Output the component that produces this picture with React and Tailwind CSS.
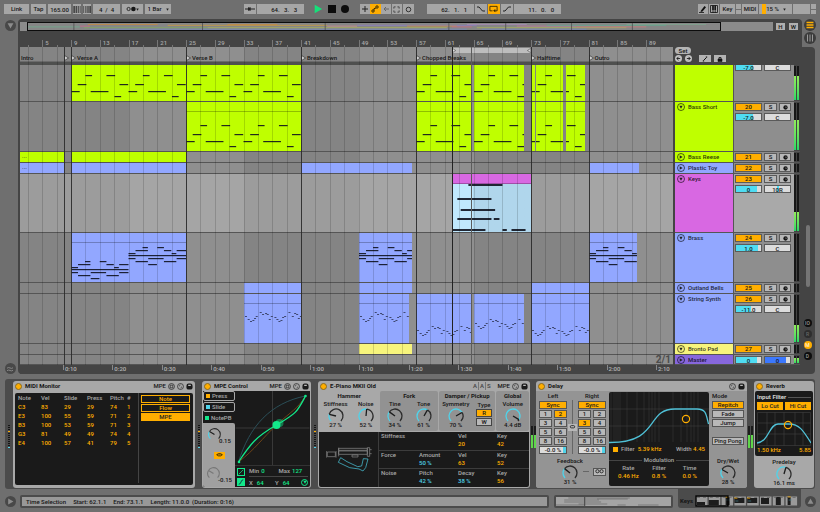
import { useState } from 'react';
import clsx from 'clsx';

// Visible range of the arrangement, in bars
const FIRST_BAR = 1.9;
const BAR_SPAN = 90.85;
const pct = (bar) => `${((bar - FIRST_BAR) / BAR_SPAN) * 100}%`;
const span = (bars) => `${(bars / BAR_SPAN) * 100}%`;

// [x1, x2, y] - x in 1/172 of eight bars, y in pixels
const BASS_NOTES = [
  [0, 26, 26], [20, 46, 19], [43, 63, 10], [59, 112, 26], [106, 132, 10], [130, 150, 31], [145, 171, 19],
];
const BRASS_NOTES = [
  [0, 172, 22], [0, 21, 20], [0, 21, 25], [21, 58, 17], [21, 58, 28], [42, 58, 14], [59, 105, 25],
  [59, 85, 31], [86, 106, 14], [106, 128, 17], [106, 143, 28], [129, 143, 20], [144, 172, 17], [144, 172, 25],
];
const BRASS_LOW = BRASS_NOTES.map(([a, b, y]) => [a, b, y + 14]);
const SYNTH_DOTS = [
  [6, 22], [14, 25], [21, 27], [28, 26], [33, 24], [38, 22], [50, 18], [57, 20], [66, 19], [71, 20], [77, 25],
  [83, 22], [94, 23], [100, 25], [106, 27], [112, 26], [117, 23], [123, 22], [136, 18], [146, 22], [153, 19],
  [159, 20], [164, 24], [170, 22],
];
const synth = (dy) => SYNTH_DOTS.map(([x, y]) => [x - 3, x + 3, y + dy]);
const repeat = (notes, n) =>
  Array.from({ length: n }, (_, i) => notes.map(([a, b, y]) => [a + i * 172, b + i * 172, y])).flat();
const KEYS_NOTES = [
  [49, 151, 10], [16, 118, 24], [26, 129, 35], [16, 118, 44], [125, 142, 44], [0, 100, 55], [151, 164, 55], [178, 220, 55],
];

const BASS_CLIPS = [
  { from: 9, to: 25 }, { from: 25, to: 41 }, { from: 57, to: 64.6 }, { from: 65, to: 72 },
  { from: 73, to: 73.5 }, { from: 73.7, to: 77.5, shift: 0.7 }, { from: 77.8, to: 80.5, shift: 4.8 },
].map((c) => ({ ...c, notes: repeat(BASS_NOTES, 2) }));

const LIME = 'bg-[#bfff00]';
const BLUE = 'bg-[#92a7ff]';

const TRACKS = [
  { id: 19, h: 'h-[37px]', color: LIME, cut: true, vol: '-7.0', fill: 68, pan: 'C', level: 72, clips: BASS_CLIPS },
  { id: 20, name: 'Bass Short', h: 'h-[50px]', color: LIME, open: true, vol: '-7.0', fill: 68, pan: 'C', level: 64, head: true, clips: BASS_CLIPS.slice(1) },
  { id: 21, name: 'Bass Reese', h: 'h-[11px]', color: LIME, clips: [{ from: 1.9, to: 8, more: true }, { from: 9, to: 25 }] },
  { id: 22, name: 'Plastic Toy', h: 'h-[11px]', color: BLUE, clips: [{ from: 1.9, to: 8, more: true }, { from: 9, to: 25 }, { from: 41, to: 56.5 }, { from: 81, to: 88 }] },
  {
    id: 23, name: 'Keys', h: 'h-[59px]', color: 'bg-[#d868e2]', open: true, active: true, vol: '0', fill: 84, pan: '10R', level: 34, head: true,
    clips: [{ from: 62, to: 73, notes: KEYS_NOTES, body: 'bg-linear-to-r from-[#c0e8fd] from-27% to-[#b0d6ec] to-27%', tall: true }],
  },
  {
    id: 24, name: 'Brass', h: 'h-[50px]', color: BLUE, open: true, vol: '1.0', fill: 86, pan: 'C', level: 0, head: true,
    clips: [
      { from: 9, to: 25, notes: [...BRASS_LOW, ...BRASS_NOTES.map(([a, b, y]) => [a + 172, b + 172, y])], tall: true },
      { from: 49, to: 56.5, notes: BRASS_NOTES, tall: true },
      { from: 81, to: 87.7, notes: BRASS_NOTES, tall: true },
    ],
  },
  { id: 25, name: 'Outland Bells', h: 'h-[11px]', color: BLUE, clips: [{ from: 33, to: 41 }, { from: 49, to: 56.5 }, { from: 73, to: 81 }] },
  {
    id: 26, name: 'String Synth', h: 'h-[50px]', color: BLUE, open: true, vol: '-11.0', fill: 58, pan: 'C', level: 36, head: true,
    clips: [
      { from: 33, to: 41, notes: synth(0), tall: true, thin: true },
      { from: 49, to: 56, notes: synth(0), tall: true, thin: true },
      { from: 57, to: 64.6, notes: synth(14), tall: true, thin: true },
      { from: 65, to: 72, notes: synth(7), tall: true, thin: true },
      { from: 73, to: 81, notes: synth(14), tall: true, thin: true },
    ],
  },
  { id: 27, name: 'Bronto Pad', h: 'h-[11px]', color: 'bg-[#f7f47c]', open: true, clips: [{ from: 49, to: 56.5 }] },
  { id: 'master', name: 'Master', h: 'h-[10px]', color: 'bg-[#8767dd]', level: 70, clips: [] },
];

const LOCATORS = [
  { bar: 8, name: '' }, { bar: 9, name: 'Verse A' }, { bar: 25, name: 'Verse B' }, { bar: 41, name: 'Breakdown' },
  { bar: 57, name: 'Chopped Breaks' }, { bar: 73, name: 'Halftime' }, { bar: 81, name: 'Outro' },
];

const BOX = 'flex items-center justify-center bg-[#a6a6a6] h-[10px] text-[#161616]';
const ON = 'bg-[#ffae00]';

/* ---------- small parts ---------- */

const Tri = ({ dir = 'right', className, fill = '#222' }) => (
  <svg viewBox="0 0 6 6" className={className} aria-hidden="true">
    <path d={dir === 'right' ? 'M1 .5 5.5 3 1 5.5Z' : dir === 'down' ? 'M.5 1h5L3 5.5Z' : 'M.5 5h5L3 .5Z'} fill={fill} />
  </svg>
);

const RoundButton = ({ label, dir }) => (
  <button aria-label={label} className="flex size-[11px] items-center justify-center rounded-full bg-[#484848]">
    <Tri dir={dir} fill="#8c8c8c" className="size-[7px]" />
  </button>
);

const Field = ({ label, value, className, style }) => (
  <input aria-label={label} defaultValue={value} style={style} className={clsx('min-w-0 p-0 text-center outline-none', className)} />
);

const Knob = ({ label, value, text, off, className, compact }) => {
  const point = (v, r) => {
    const a = ((135 + v * 270) * Math.PI) / 180;
    return `${9 + Math.cos(a) * r} ${9 + Math.sin(a) * r}`;
  };
  const arc = (from, to) => `M${point(from, 7)}A7 7 0 ${(to - from) * 270 > 180 ? 1 : 0} 1 ${point(to, 7)}`;
  return (
    <label className={clsx('relative flex flex-col items-center', className)}>
      {!compact && <span className="h-[8px] whitespace-nowrap">{label}</span>}
      <svg viewBox="0 0 18 18" className={compact ? 'size-[15px] self-start' : '-mt-px size-[18px]'} fill="none" strokeWidth="1.300">
        <path d={arc(value, 1)} stroke={off ? '#777' : '#2c2c2c'} />
        <path d={arc(0, value)} stroke={off ? '#777' : '#4fd3ea'} />
        <path d={`M9 9 ${point(value, 7)}`} stroke={off ? '#777' : '#1c1c1c'} />
      </svg>
      <span className={clsx('h-[8px] whitespace-nowrap', compact ? '-mt-[5px] ml-[12px]' : '-mt-1')}>{text}</span>
      <input type="range" aria-label={label} min="0" max="1" step="0.01" defaultValue={value} className="absolute inset-0 w-full opacity-0" />
    </label>
  );
};

/* ---------- top bar ---------- */

const TopBar = () => (
  <header className="flex h-[19px] items-center px-1 pb-px">
    <div className="flex gap-[2px]">
      <button className={clsx(BOX, 'w-[25px]')}>Link</button>
      <button className={clsx(BOX, 'w-[15px]')}>Tap</button>
      <Field label="Tempo" value="165.00" className={clsx(BOX, 'w-[23px]')} />
      {['Nudge down', 'Nudge up'].map((l, k) => (
        <button key={l} aria-label={l} className={clsx(BOX, 'w-[8px]')}>
          <svg viewBox="0 0 8 7" className="w-[8px]" fill="#222">
            <path d={k ? 'M.5 0h.6v7H.5ZM2.500 0h.8v7h-.8ZM4.500 0h1v7h-1ZM6.500 0h1.200v7H6.500Z' : 'M.5 0h1.200v7H.5ZM2.700 0h1v7h-1ZM4.800 0h.8v7h-.8ZM6.800 0h.6v7h-.6Z'} />
          </svg>
        </button>
      ))}
      <Field label="Time signature" value="4  /  4" className={clsx(BOX, 'w-[27px] whitespace-pre')} />
      <button aria-label="Metronome" className={clsx(BOX, 'w-[21px] justify-between px-[2px]')}>
        <svg viewBox="0 0 10 6" className="h-[6px] w-[10px]">
          <circle cx="2.600" cy="3" r="1.600" fill="none" stroke="#222" strokeWidth=".9" />
          <circle cx="7.400" cy="3" r="2.300" fill="#161616" />
        </svg>
        <Tri dir="down" className="size-[3px]" />
      </button>
      <div className={clsx(BOX, 'w-[26px]')}>
        <select aria-label="Quantization" className="w-[18px] appearance-none p-0 outline-none">
          <option>1 Bar</option>
        </select>
        <Tri dir="down" className="size-[3px]" />
      </div>
    </div>
    <div className="flex-[74]" />
    <div className="flex items-center">
      <button aria-label="Follow" className={clsx(BOX, 'mr-px w-[12px]')}>
        <svg viewBox="0 0 10 6" className="w-[10px]"><path d="M0 3h10" stroke="#222" /><path d="M3 1v4l3-2Z" fill="#222" /><path d="M5 1v4" stroke="#222" /></svg>
      </button>
      <Field label="Position" value="64.   3.   3" className={clsx(BOX, 'w-[47px] pl-2 whitespace-pre')} />
      <button aria-label="Play" className="ml-[9px]"><Tri fill="#16e07a" className="size-[10px]" /></button>
      <button aria-label="Stop" className="ml-[5px] size-[8px] bg-[#0c0c0c]" />
      <button aria-label="Record" className="ml-[5px] size-[8px] rounded-full bg-[#0c0c0c]" />
      <button aria-label="Overdub" className={clsx(BOX, 'ml-[11px] w-[10px]')}>
        <svg viewBox="0 0 6 6" className="w-[6px]"><path d="M3 0v6M0 3h6" stroke="#222" /></svg>
      </button>
      <button aria-label="Automation arm" className={clsx(BOX, ON, 'w-[11px]')}>
        <svg viewBox="0 0 8 8" className="w-[8px]" fill="none" stroke="#3a2a00"><circle cx="2" cy="6" r="1.200" /><circle cx="6" cy="2" r="1.200" /><path d="M3 5.400V3.600L5 3" /></svg>
      </button>
      <button aria-label="Re-enable automation" className={clsx(BOX, 'w-[10px]')}>
        <svg viewBox="0 0 6 6" className="w-[6px]" fill="none" stroke="#666"><path d="M6 3H1M3 1 1 3l2 2" /></svg>
      </button>
      <button aria-label="Capture" className={clsx(BOX, 'ml-px w-[10px]')}>
        <svg viewBox="0 0 8 8" className="w-[7px]" fill="none" stroke="#444"><path d="M1 3V1h2M5 1h2v2M7 5v2H5M3 7H1V5" /></svg>
      </button>
      <button aria-label="Session record" className={clsx(BOX, 'ml-px w-[11px]')}>
        <svg viewBox="0 0 8 8" className="w-[7px]" fill="none" stroke="#222"><circle cx="4" cy="4" r="2.600" /></svg>
      </button>
      <Field label="Loop start" value="62.   1.   1" className={clsx(BOX, 'ml-[13px] w-[47px] pl-2 whitespace-pre')} />
      <button aria-label="Punch in" className={clsx(BOX, 'ml-px w-[12px]')}>
        <svg viewBox="0 0 8 6" className="w-[8px]" fill="none" stroke="#222"><path d="M0 1h2l3.500 4H8" /></svg>
      </button>
      <button aria-label="Loop" className={clsx(BOX, ON, 'ml-px w-[12px]')}>
        <svg viewBox="0 0 10 8" className="w-[9px]" fill="none" stroke="#3a2a00"><path d="M4 6.500H1v-5h8v5H6.500" /><path d="M7 4.500v3.500l-2.500-1.700Z" fill="#3a2a00" stroke="none" /></svg>
      </button>
      <button aria-label="Punch out" className={clsx(BOX, 'ml-px w-[12px]')}>
        <svg viewBox="0 0 8 6" className="w-[8px]" fill="none" stroke="#222"><path d="M0 5h2l3.500-4H8" /></svg>
      </button>
      <Field label="Loop length" value="11.   0.   0" className={clsx(BOX, 'ml-px w-[47px] pl-2 whitespace-pre')} />
    </div>
    <div className="flex-[140]" />
    <div className="flex gap-px">
      <button aria-label="Draw mode" className={clsx(BOX, 'w-[10px]')}>
        <svg viewBox="0 0 8 8" className="w-[8px]"><path d="M2 5.500 5.500 1 7 2.200 3.500 6.500 1.500 7Z" fill="#111" /><path d="M0 7.500h5" stroke="#111" strokeWidth=".8" /></svg>
      </button>
      <button aria-label="Computer keyboard" className={clsx(BOX, 'w-[10px]')}>
        <svg viewBox="0 0 8 8" className="w-[8px]"><path d="M.5 .5h7v7h-7Z" fill="#aaa" stroke="#111" strokeWidth=".8" /><path d="M3 0v8M5.200 0v8" stroke="#111" strokeWidth=".8" /><path d="M2.300 1h1.400v4H2.300ZM4.500 1h1.400v4H4.500Z" fill="#111" /></svg>
      </button>
      <button className={clsx(BOX, 'w-[15px]')}>Key</button>
      <div className="flex w-[5px] flex-col gap-px"><i className="flex-1 bg-[#a6a6a6]" /><i className="flex-1 bg-[#a6a6a6]" /></div>
      <button className={clsx(BOX, 'w-[16px]')}>MIDI</button>
      <div className={clsx(BOX, 'w-[33px] justify-between pr-[3px]')}>
        <span className="h-full w-[4px] bg-[#ffae00]" />
        <span>15 %</span>
        <Tri dir="down" className="ml-[4px] size-[3px]" />
      </div>
      <div className={clsx(BOX, 'w-[17px]')} />
      <div className="flex w-[5px] flex-col gap-px"><i className="flex-1 bg-[#a6a6a6]" /><i className="flex-1 bg-[#a6a6a6]" /></div>
    </div>
  </header>
);

/* ---------- arrangement ---------- */

const OVERVIEW_LINES = [
  [0, 52, 5, '#6fa98b'], [60, 130, 2, '#c98b3e'], [56, 180, 6, '#7fa860'], [62, 300, 8, '#7488c0'], [140, 300, 3, '#c99a3e'],
  [52, 62, 4, '#c96a8b'], [180, 420, 6, '#a7b05a'], [200, 250, 2, '#c98b3e'], [300, 330, 4, '#d09090'], [330, 450, 3, '#8b7dc0'],
  [380, 430, 4, '#c98b3e'], [300, 440, 8, '#7488c0'], [425, 445, 5, '#c96a8b'], [440, 500, 2, '#a88bb8'], [450, 600, 6, '#a7b05a'],
  [490, 550, 4, '#c07a9a'], [520, 640, 3, '#62a890'], [550, 620, 5, '#d07a7a'], [600, 680, 2, '#7fa890'], [455, 560, 8, '#7488c0'],
];

const Overview = () => (
  <div className="flex h-[9px] items-stretch pl-[2px]">
    <div className="flex flex-1 bg-[#8b8b8b] pl-[7px]">
      <div className="flex-[694] border border-[#0c0c0c] bg-[#868686]">
        <svg viewBox="0 0 694 9" preserveAspectRatio="none" className="block h-full w-full">
          {OVERVIEW_LINES.map(([a, b, y, c], k) => <path key={k} d={`M${a} ${y}H${b}`} stroke={c} strokeWidth=".9" />)}
          <path d="M46 0v9M175 0v9M298 0v9M422 0v9M479 0v9M545 0v9M606 0v9" stroke="#555" />
        </svg>
      </div>
      <div className="flex-[52]" />
    </div>
    <div className="flex w-[29px] items-center justify-end gap-[4px] pr-[4px]">
      <button className="h-[7px] w-[9px] bg-[#b0b0b0] leading-[7px]">H</button>
      <button className="h-[7px] w-[9px] bg-[#b0b0b0] leading-[7px]">W</button>
    </div>
  </div>
);

const BarRuler = () => (
  <div className="relative mr-[129px] ml-[2px] h-[8px] overflow-hidden text-[#a8a8a8]">
    {Array.from({ length: 44 }, (_, k) => 3 + k * 2).map((bar) => (
      <span
        key={bar}
        className={clsx('absolute bottom-0 border-l border-[#777] pl-[2px] leading-[6px]', bar % 4 === 1 ? 'h-[7px]' : 'h-[2px]')}
        style={{ left: pct(bar) }}
      >
        {bar % 4 === 1 && bar}
      </span>
    ))}
  </div>
);

const Clip = ({ clip, track }) => (
  <div
    className={clsx('absolute inset-y-0 flex flex-col overflow-hidden', track.color)}
    style={{ left: pct(clip.from), width: span(clip.to - clip.from) }}
  >
    {track.head && <div className="h-[10px] shrink-0 border-b border-black/25" />}
    {clip.more && <span className="pl-[2px] leading-[8px] text-black/70">...</span>}
    {clip.notes && (
      <div className={clsx('relative flex-1', clip.body)}>
        <svg
          viewBox={`${((clip.shift || 0) * 172) / 8} 0 ${((clip.to - clip.from) * 172) / 8} ${clip.body ? 58 : clip.tall ? 49 : 36}`}
          preserveAspectRatio="none"
          className={clsx('absolute bottom-0 w-full', clip.body ? 'h-[58px]' : clip.tall ? 'h-[49px]' : 'h-[36px]')}
        >
          {clip.notes.map(([a, b, y], k) => (
            <rect key={k} x={a} y={y} width={b - a} height={clip.body ? 2 : clip.thin ? 0.8 : 1.2} fill="#10131f" opacity={clip.thin ? 0.8 : 0.9} />
          ))}
        </svg>
      </div>
    )}
  </div>
);

const Bands = () => (
  <>
    {[17, 49, 81].map((bar) => (
      <div key={bar} className="absolute inset-y-0 bg-[#8f8f8f]" style={{ left: pct(bar), width: span(Math.min(16, 92.75 - bar)) }} />
    ))}
  </>
);

const GridLines = () => (
  <>
    {Array.from({ length: 45 }, (_, k) => 3 + k * 2).map((bar) => (
      <i key={bar} className="absolute inset-y-0 w-px bg-black/15" style={{ left: pct(bar) }} />
    ))}
    {LOCATORS.map(({ bar }) => (
      <i key={bar} className="absolute inset-y-0 w-px bg-[#2b2b2b]/90" style={{ left: pct(bar) }} />
    ))}
    <i className="absolute inset-y-0 w-px bg-[#222]" style={{ left: pct(62) }} />
    <i className="absolute inset-y-0 w-px bg-[#5c5c5c]" style={{ left: pct(64.6) }} />
  </>
);

const Timeline = () => (
  <div className="relative flex-1 overflow-hidden">
    <div className="absolute inset-x-0 top-0 bottom-[9px] bg-[#848484]"><Bands /></div>
    <div className="relative h-[14px]">
      <div className="absolute top-px flex h-[5px] items-center justify-between bg-[#bdbdbd]" style={{ left: pct(62), width: span(11) }}>
        <svg viewBox="0 0 5 6" className="h-[5px]"><path d="M.5 .5 4.500 3 .5 5.500Z" fill="#ddd" stroke="#333" strokeWidth=".6" /></svg>
        <svg viewBox="0 0 5 6" className="h-[5px]"><path d="M4.500 .5 .5 3l4 2.500Z" fill="#ddd" stroke="#333" strokeWidth=".6" /></svg>
      </div>
      <span className="absolute bottom-0 pl-px leading-[7px]">Intro</span>
      {LOCATORS.map((l) => (
        <span key={l.bar} className="absolute bottom-0 flex items-center gap-px leading-[7px] whitespace-nowrap" style={{ left: pct(l.bar) }}>
          <svg viewBox="0 0 5 6" className="h-[6px]"><path d="M.5 .5 4.500 3 .5 5.500Z" fill="#d0d0d0" stroke="#222" strokeWidth=".6" /></svg>
          {l.name}
        </span>
      ))}
    </div>
    <div className="relative h-[4px] border-t border-[#6b6b6b] bg-[#4f504f]" />
    {TRACKS.map((t) => (
      <div key={t.id} className={clsx('relative border-b border-[#555]', t.h, t.active && 'bg-white/20')}>
        {t.clips.map((c) => <Clip key={c.from} clip={c} track={t} />)}
      </div>
    ))}
    <div className="relative h-[9px] bg-[#444] text-[#b4b4b4]">
      {Array.from({ length: 13 }, (_, k) => (k + 1) * 10).map((s) => (
        <span key={s} className="absolute top-0 h-[5px] border-l border-[#888] pl-px leading-[8px]" style={{ left: pct(1 + s * 0.6875) }}>
          {Math.floor(s / 60)}:{String(s % 60).padStart(2, '0')}
        </span>
      ))}
    </div>
    <div className="pointer-events-none absolute inset-x-0 top-0 bottom-[9px]"><GridLines /></div>
    <span className="absolute right-[2px] bottom-[9px] text-[10px] leading-[11px] font-bold text-[#4c4c4c]">2/1</span>
  </div>
);

const Meter = ({ level = 0 }) => (
  <div className="flex w-[6px] gap-px py-px pr-px">
    {[0, 1].map((k) => (
      <span key={k} className="flex flex-1 flex-col justify-end bg-[#161616]">
        <i className="bg-linear-to-t from-[#24d964] to-[#8fee5a]" style={{ height: `${level}%` }} />
      </span>
    ))}
  </div>
);

const slider = (fill, color) => ({ background: `linear-gradient(90deg, ${color} ${fill}%, #dcdcdc ${fill}%)` });

const CELL = 'h-[8px] border border-[#5a5a5a] leading-[6px]';

const TrackMixer = ({ t }) => {
  const [on, setOn] = useState(true);
  const master = t.id === 'master';
  return (
    <div className={clsx('flex flex-1 flex-col gap-[2px] overflow-hidden pl-px', t.active ? 'bg-[#a9a9a9]' : 'bg-[#8e8e8e]', t.cut ? 'pt-0' : 'pt-px')}>
      {master && (
        <div className="flex gap-[2px]">
          <Field label="Master volume" value="0" className={clsx(CELL, 'w-[27px]')} style={slider(84, '#4fdcf2')} />
          <Field label="Cue volume" value="0" className={clsx(CELL, 'w-[27px]')} style={slider(84, '#3b78ff')} />
        </div>
      )}
      {!master && !t.cut && (
        <div className="flex gap-[2px]">
          <button onClick={() => setOn(!on)} className={clsx(CELL, 'w-[27px]', on ? ON : 'bg-[#999]')}>{t.id}</button>
          <button className={clsx(CELL, 'w-[13px] bg-[#b8b8b8]')}>S</button>
          <button aria-label={`Arm ${t.name}`} className={clsx(CELL, 'flex w-[12px] items-center justify-center bg-[#b8b8b8]')}>
            <svg viewBox="0 0 6 6" className="size-[5px]"><circle cx="3" cy="3" r="2.600" fill="#161616" /><path d="M3.200 1.500 4.500 2.600 3.200 3.600Z" fill="#bbb" /></svg>
          </button>
        </div>
      )}
      {t.vol && (
        <div className="flex gap-[2px]">
          <Field label={`${t.name || 'Bass'} volume`} value={t.vol} className={clsx(CELL, 'w-[27px]', t.cut && '-mt-[2px]')} style={slider(t.fill, '#4fdcf2')} />
          <Field label={`${t.name || 'Bass'} pan`} value={t.pan} className={clsx(CELL, 'w-[27px]', t.cut && '-mt-[2px]')} style={t.pan === 'C' ? slider(0, '#ddd') : { background: 'linear-gradient(90deg, #dcdcdc 50%, #4fdcf2 50%, #4fdcf2 58%, #dcdcdc 58%)' }} />
        </div>
      )}
    </div>
  );
};

const TrackHeaders = () => (
  <div className="w-[127px] shrink-0 pl-[2px]">
    <div className="flex h-[18px] flex-col items-start">
      <button className="h-[7px] w-[16px] rounded-full bg-[#b4b4b4] leading-[7px]">Set</button>
      <div className="mt-px flex items-center">
        {['M5 3H1M3 1 1 3l2 2', 'M1 3h4M3 1l2 2-2 2'].map((d, k) => (
          <button key={d} aria-label={k ? 'Next locator' : 'Previous locator'} className="mr-[3px] flex size-[7px] items-center justify-center rounded-full bg-[#c2c2c2]">
            <svg viewBox="0 0 6 6" className="size-[5px]" fill="none" stroke="#111"><path d={d} /></svg>
          </button>
        ))}
        <button aria-label="Automation mode" className="ml-[4px] flex h-[7px] w-[12px] items-center justify-center bg-[#b4b4b4]">
          <svg viewBox="0 0 6 6" className="size-[6px]" fill="none" stroke="#111"><path d="M1.500 4.500l3-3" /><path d="M.8 5h1.400M3.800 1h1.400" /></svg>
        </button>
        <button aria-label="Lock envelopes" className="ml-[3px] flex h-[7px] w-[12px] items-center justify-center bg-[#b4b4b4]">
          <svg viewBox="0 0 6 6" className="size-[6px]" fill="none" stroke="#111"><path d="M1 3h4v2.500H1Z" fill="#111" strokeWidth=".6" /><path d="M2 3V1.500h2V3" strokeWidth=".8" /></svg>
        </button>
      </div>
    </div>
    {TRACKS.map((t) => (
      <div key={t.id} className={clsx('flex border-b border-[#555]', t.h)}>
        <div className={clsx('flex w-[58px] items-start gap-[3px] pl-[2px]', t.color)}>
          {t.name && (
            <>
              <button aria-label={`Fold ${t.name}`} className="mt-px flex size-[8px] items-center justify-center rounded-full border border-black/60">
                <Tri dir={t.open ? 'down' : 'right'} className="size-[4px]" />
              </button>
              <span className="leading-[9px] text-black/80">{t.name}</span>
            </>
          )}
        </div>
        <div className="w-px bg-[#555]" />
        <TrackMixer t={t} />
        <Meter level={t.level} />
      </div>
    ))}
  </div>
);

const Arrangement = () => (
  <section className="flex">
    <div className="flex w-[18px] flex-col items-center justify-between pt-px pl-[2px]">
      <RoundButton label="Show browser" dir="down" />
      <button aria-label="Groove pool" className="flex size-[11px] items-center justify-center rounded-full bg-[#484848]">
        <svg viewBox="0 0 8 8" className="size-[8px]" fill="none" stroke="#8c8c8c" strokeWidth=".9"><path d="M1 3.200c2-2 4 1.500 6-.4M1 5.700c2-2 4 1.500 6-.4" /></svg>
      </button>
    </div>
    <div className="flex min-w-0 flex-1 flex-col">
      <div className="flex h-[28px]">
        <div className="flex flex-1 flex-col justify-between rounded-t bg-[#444] pt-[3px]">
          <Overview />
          <BarRuler />
        </div>
        <div className="flex w-[18px] flex-col items-center gap-px pr-[2px]">
          <button aria-label="Arrangement view" className="flex size-[12px] items-center justify-center rounded-full bg-[#3c3c3c]">
            <svg viewBox="0 0 8 8" className="size-[8px]" stroke="#ffae00" strokeWidth="1.400"><path d="M.5 1.500h7M.5 4h7M.5 6.500h7" /></svg>
          </button>
          <button aria-label="Session view" className="flex size-[12px] items-center justify-center rounded-full bg-[#3c3c3c]">
            <svg viewBox="0 0 8 8" className="size-[8px]" stroke="#999"><path d="M1.500 .5v7M4 .5v7M6.500 .5v7" /></svg>
          </button>
        </div>
      </div>
      <div className="mr-[5px] flex rounded-tr rounded-b bg-[#444] pl-[2px]">
        <Timeline />
        <TrackHeaders />
        <div className="flex w-[15px] shrink-0 flex-col items-center justify-end gap-[3px] pb-[14px]">
          <i className="mb-[29px] h-[62px] w-[4px] rounded-full bg-[#757575]" />
          {['IO', 'R', 'M', 'D'].map((l) => (
            <button
              key={l}
              className={clsx('flex size-[8px] items-center justify-center rounded-full text-[5px] leading-none',
                l === 'M' ? 'bg-[#ffae00] text-[#fff3d0]' : l === 'R' ? 'bg-[#2e2e2e] text-[#666]' : 'bg-[#0e0e0e] text-[#999]')}
            >
              {l}
            </button>
          ))}
        </div>
      </div>
    </div>
  </section>
);

/* ---------- devices ---------- */

const Device = ({ title, extra, mpe, icons = 3, className, children }) => (
  <article className={clsx('flex min-w-0 grow flex-col rounded-[3px] bg-[#a8a8a8]', className)}>
    <header className="flex h-[10px] shrink-0 items-center gap-[2px] px-[2px]">
      <button aria-label={`${title} on`} className="size-[7px] rounded-full border border-[#8a6a20] bg-[#ffae00]" />
      <h2 className="pl-px font-bold whitespace-nowrap">{title}</h2>
      <span className="flex-1" />
      {extra}
      {mpe && <span>MPE</span>}
      {icons > 2 && (
        <svg viewBox="0 0 8 8" className="size-[7px]" fill="none" stroke="#222" strokeWidth=".8"><circle cx="4" cy="4" r="3.400" /><path d="M2.500 2.500h3v3h-3Z" /></svg>
      )}
      {icons > 1 && (
        <>
          <svg viewBox="0 0 8 8" className="size-[7px]" fill="none" stroke="#222" strokeWidth=".8"><circle cx="4" cy="4" r="3.400" /><path d="M2.200 3.800 4 2.200M4 5.800l1.800-1.600" /></svg>
          <svg viewBox="0 0 8 8" className="size-[7px]"><rect x=".5" y=".5" width="7" height="7" rx="2.500" fill="#1a1a1a" /><path d="M2.500 2h3v1.500h-3Z" fill="#bbb" /></svg>
        </>
      )}
    </header>
    {children}
  </article>
);

const ChainMeter = ({ green, width = 'w-[7px]' }) => (
  <div className={clsx('flex shrink-0 items-center justify-center', width)}>
    {green ? (
      <div className="mt-[4px] flex h-[22px] gap-px">
        {[0, 1].map((k) => (
          <i key={k} className="w-[2px] bg-linear-to-t from-[#5fd64a] from-60% to-[#1c1c1c] to-60%" />
        ))}
      </div>
    ) : (
      <div className="mt-[4px] flex flex-col gap-px">
        {Array.from({ length: 12 }, (_, k) => (
          <i key={k} className={clsx('h-px w-[2px]', k === 3 ? 'bg-[#ffae00]' : k === 11 ? 'bg-[#4fd3ea]' : 'bg-[#161616]')} />
        ))}
      </div>
    )}
  </div>
);

const NOTES = [
  ['C3', 83, 29, 29, 74, 1],
  ['E3', 100, 55, 59, 71, 2],
  ['B3', 100, 53, 59, 71, 3],
  ['G3', 81, 49, 49, 74, 4],
  ['E4', 100, 57, 41, 79, 5],
];

const MidiMonitor = () => (
  <Device title="MIDI Monitor" mpe className="basis-[182px]">
    <div className="m-[2px] mb-[3px] flex flex-1 rounded-[2px] bg-[#1a1a1a] pb-[2px] pr-[3px] pl-[3px]">
      <div className="flex-1 border-r border-[#444]">
        <table className="w-[115px] table-fixed text-left leading-[9px]">
          <thead className="text-[#a8a8a8]">
            <tr>
              {['Note', 'Vel', 'Slide', 'Press', 'Pitch', '#'].map((h) => (
                <th key={h} className={clsx('p-0 font-medium', h === '#' ? 'w-[7px]' : h === 'Pitch' ? 'w-[17px]' : 'w-[23px]')}>{h}</th>
              ))}
            </tr>
          </thead>
          <tbody className="text-[#ffae00]">
            {NOTES.map((r) => (
              <tr key={r[5]}>{r.map((v, k) => <td key={k} className="p-0">{v}</td>)}</tr>
            ))}
          </tbody>
        </table>
      </div>
      <div className="flex w-[51px] flex-col gap-px pt-[2px] pl-[2px] leading-[6px] text-[#ffae00]">
        <button className="h-[8px] border border-[#ffae00]">Note</button>
        <button className="h-[8px] border border-[#ffae00]">Flow</button>
        <button className="h-[8px] bg-[#ffae00] text-[#222]">MPE</button>
      </div>
    </div>
  </Device>
);

const MpeControl = () => (
  <Device title="MPE Control" mpe className="basis-[109px]">
    <div className="mx-px mb-px flex flex-1 overflow-hidden rounded-b-[2px] bg-[#1a1a1a]">
      <div className="flex w-[32px] flex-col text-[#a8a8a8]">
        {[['Press', 'bg-[#ffae00]'], ['Slide', 'bg-[#4fd3ea]'], ['NotePB', 'bg-[#12e88a]']].map(([name, color]) => (
          <button
            key={name}
            className={clsx('flex h-[10px] items-center gap-[2px] pl-[2px] leading-none', name !== 'NotePB' && 'mb-px rounded-[2px] border border-[#a8a8a8]')}
          >
            <i className={clsx('size-[4px]', color)} />
            {name}
          </button>
        ))}
        <div className="flex flex-1 flex-col items-center justify-around rounded-tr-[2px] bg-[#a0a0a0] text-[#161616]">
          <Knob label="Press amount" compact value={0.28} text="0.15" />
          <button aria-label="Link amounts" className="flex h-[7px] w-[11px] items-center justify-center bg-[#ffae00]">
            <svg viewBox="0 0 8 4" className="w-[7px]" fill="none" stroke="#3a2a00"><rect x="1.500" y=".7" width="5" height="2.600" rx="1.300" /><path d="M0 2h8" strokeWidth=".6" /></svg>
          </button>
          <Knob label="Release amount" compact value={0.28} text="-0.15" off />
        </div>
      </div>
      <div className="flex flex-1 flex-col">
        <svg viewBox="0 0 74 74" className="h-[74px] w-full" fill="none">
          <path d="M37 0v74M0 37h74" stroke="#484848" strokeWidth=".7" />
          <path d="M3 71C14 35 35 12 70 5" stroke="#2b4f58" />
          <path d="M3 71C20 58 26 48 41 34S62 18 70 5" stroke="#6e4418" />
          <path d="M3 71C15 53 20 46 41 34S62 20 70 5" stroke="#12e88a" strokeWidth="1.300" />
          <circle cx="44" cy="32" r="4" fill="#12e88a" opacity=".45" />
          <circle cx="41" cy="34" r="4" fill="#12e88a" />
          <circle cx="3.500" cy="71" r="1.300" fill="#12e88a" /><circle cx="70" cy="5" r="1.300" fill="#12e88a" />
        </svg>
        <div className="flex flex-1 items-center gap-[4px] border-t border-[#333] px-[2px]">
          <div className="flex flex-col gap-[2px]">
            {['M1 7 7 1', 'M1 7C5 7 3 1 7 1'].map((d, k) => (
              <button key={d} aria-label={k ? 'S curve' : 'Linear curve'} className={clsx('size-[8px] border border-[#12e88a]', k && 'bg-[#12e88a]')}>
                <svg viewBox="0 0 8 8" className="size-[6px]" fill="none" stroke={k ? '#113' : '#12e88a'}><path d={d} /></svg>
              </button>
            ))}
          </div>
          <div className="flex-1">
            <dl className="grid grid-cols-2 border-b border-[#444] text-[#a8a8a8] [&_dd]:text-[#12e88a]">
              <div className="flex h-[9px] gap-[2px]"><dt>Min</dt><dd>0</dd></div>
              <div className="flex h-[9px] gap-[2px]"><dt>Max</dt><dd>127</dd></div>
            </dl>
            <div className="flex h-[10px] items-end">
              <dl className="grid flex-1 grid-cols-2 text-[#a8a8a8] [&_dd]:text-[#12e88a]">
                <div className="flex gap-[4px]"><dt>X</dt><dd>64</dd></div>
                <div className="flex gap-[4px]"><dt>Y</dt><dd>64</dd></div>
              </dl>
              <button aria-label="More" className="mb-px flex size-[7px] items-center justify-center rounded-full border border-[#12e88a]">
                <Tri dir="down" fill="#12e88a" className="size-[4px]" />
              </button>
            </div>
          </div>
        </div>
      </div>
    </div>
  </Device>
);

const MATRIX = [
  [['Stiffness'], [], ['Vel', '20'], ['Key', '42']],
  [['Force'], ['Amount', '50 %'], ['Vel', '63'], ['Key', '52']],
  [['Noise'], ['Pitch', '42 %'], ['Decay', '38 %'], ['Key', '56']],
];

const Panel = ({ title, className, children }) => (
  <section className={clsx('flex flex-col', className)}>
    <h3 className="h-[9px] pt-px text-center font-bold">{title}</h3>
    <div className="flex justify-around">{children}</div>
  </section>
);

const EPiano = () => (
  <Device
    title="E-Piano MKII Old"
    mpe
    icons={2}
    className="basis-[212px]"
    extra={<span className="mr-[4px] flex text-[#444]">{['A', 'A', 'S'].map((l, k) => <b key={k} className="border-r border-[#777] px-px font-medium last:border-0">{l}</b>)}</span>}
  >
    <div className="flex h-[40px] gap-px px-px">
      <Panel title="Hammer" className="flex-[61]">
        <Knob label="Stiffness" value={0.22} text="27 %" />
        <Knob label="Noise" value={0.52} text="52 %" />
      </Panel>
      <Panel title="Fork" className="flex-[58] rounded-[2px] bg-[#929292]">
        <Knob label="Tine" value={0.3} text="34 %" />
        <Knob label="Tone" value={0.61} text="61 %" />
      </Panel>
      <Panel title="Damper / Pickup" className="flex-[57] rounded-[2px] bg-[#929292]">
        <Knob label="Symmetry" value={0.72} text="70 %" />
        <div className="flex flex-col items-center">
          <span className="h-[9px] pt-px">Type</span>
          <button className={clsx('h-[8px] w-[16px] border border-[#444] leading-[6px]', ON)}>R</button>
          <button className="mt-px h-[8px] w-[16px] border border-[#444] bg-[#b8b8b8] leading-[6px]">W</button>
        </div>
      </Panel>
      <Panel title="Global" className="flex-[33] rounded-[2px] bg-[#929292]">
        <Knob label="Volume" value={0.95} text="4.4 dB" />
      </Panel>
    </div>
    <div className="mx-px mt-px mb-px flex flex-1 rounded-b-[2px] bg-[#1a1a1a]">
      <div className="flex w-[60px] items-center justify-center border-r border-[#3c3c3c]">
        <svg viewBox="0 0 138 74" className="w-[46px]" fill="none" stroke="#8f8f8f" strokeWidth="2">
          <path d="M4 15h24v14H4ZM1 12v20M30 12v20M38 4h86v6H38ZM38 12h86v10H38ZM38 2v26M124 2h7v26h-7ZM131 8h6M131 20h6M78 24h18v6H78Z" />
          <path d="M44 32 37 46l34 16 28 4 12 6 8-10 7-26-14-1-5 22-12 2-32-15Z" stroke="#4fd3ea" />
        </svg>
      </div>
      <div className="flex flex-1 flex-col">
        {MATRIX.map((row) => (
          <div key={row[0][0]} className="grid flex-1 grid-cols-[38px_39px_39px_1fr] border-b border-[#3c3c3c] pl-[2px] text-[#a8a8a8] last:border-0">
            {row.map(([l, v], k) => (
              <div key={k}>
                <div className="h-[8px]">{l}</div>
                <div className={clsx('h-[8px]', v?.includes('%') ? 'text-[#4fd3ea]' : 'text-[#ffae00]')}>{v}</div>
              </div>
            ))}
          </div>
        ))}
      </div>
    </div>
  </Device>
);

const KEY = 'h-[8px] border border-[#555] leading-[6px] bg-[#b8b8b8]';
const KEY_ON = 'h-[8px] border border-[#555] leading-[6px] bg-[#ffae00]';

const DelayTime = ({ name, selected }) => {
  const [step, setStep] = useState(selected);
  return (
    <div className="flex w-[28px] flex-col gap-px">
      <span className="h-[8px] text-center">{name}</span>
      <button className={KEY_ON}>Sync</button>
      <div className="grid grid-cols-2 gap-x-[2px] gap-y-px">
        {[1, 2, 3, 4, 5, 6, 8, 16].map((n) => (
          <button key={n} onClick={() => setStep(n)} className={n === step ? KEY_ON : KEY}>{n}</button>
        ))}
      </div>
      <Field label={`${name} offset`} value="-0.0 %" className="h-[8px] border border-[#555] bg-[#dcdcdc]" style={{ backgroundImage: 'linear-gradient(90deg, transparent 88%, #4fd3ea 88%)' }} />
    </div>
  );
};

const Delay = () => (
  <Device title="Delay" icons={2} className="basis-[211px]">
    <div className="flex flex-1 gap-[3px] rounded-b-[3px] bg-[#949494] px-[3px] pt-px pb-[2px]">
      <div className="flex w-[67px] flex-col">
        <div className="flex justify-between">
          <DelayTime name="Left" selected={2} />
          <div className="flex flex-col items-center pt-[8px]">
            <i className="w-px flex-1 bg-[#666]" />
            <button aria-label="Link channels" className="flex h-[7px] w-[9px] items-center justify-center bg-[#b8b8b8]">
              <svg viewBox="0 0 8 4" className="w-[7px]" fill="none" stroke="#222"><rect x="1.500" y=".7" width="5" height="2.600" rx="1.300" /></svg>
            </button>
            <i className="w-px flex-1 bg-[#666]" />
          </div>
          <DelayTime name="Right" selected={3} />
        </div>
        <div className="flex items-center justify-end gap-[4px] pt-[3px]">
          <Knob label="Feedback" value={0.31} text="31 %" />
          <i className="-ml-[4px] h-px w-[6px] bg-[#666]" />
          <button aria-label="Freeze" className={clsx(KEY, 'flex w-[13px] items-center justify-center')}>
            <svg viewBox="0 0 10 5" className="w-[9px]" fill="none" stroke="#222"><circle cx="2.700" cy="2.500" r="1.800" /><circle cx="7.300" cy="2.500" r="1.800" /></svg>
          </button>
        </div>
      </div>
      <div className="flex flex-1 flex-col rounded-[2px] bg-[#1a1a1a] text-[#a8a8a8]">
        <svg viewBox="0 0 100 52" preserveAspectRatio="none" className="h-[52px] w-full" fill="none">
          <path d="M2 0v50M5 0v50M7 0v50M9 0v50M11 0v50M18 0v50M28 0v50M35 0v50M40 0v50M43 0v50M46 0v50M50 0v50M64 0v50M72 0v50M78 0v50M82 0v50M85 0v50M89 0v50" stroke="#343434" strokeWidth=".7" />
          <path d="M0 17h100M0 34h100" stroke="#444" strokeWidth=".5" />
          <path d="M0 50.500C52 51 36 17 66 17H88C97 17 97 22 99.500 32" stroke="#4fc0d6" strokeWidth="1.300" />
          <circle cx="77" cy="27" r="3.600" stroke="#ffae00" strokeWidth="1.200" />
        </svg>
        <div className="flex h-[10px] items-center gap-[3px] px-[4px] whitespace-nowrap">
          <input type="checkbox" aria-label="Filter on" defaultChecked className="size-[5px] appearance-none bg-[#ffae00]" />
          <span>Filter</span><b className="font-medium text-[#ffae00]">5.39 kHz</b>
          <span className="ml-auto">Width <b className="font-medium text-[#ffae00]">4.45</b></span>
        </div>
        <div className="mt-[2px] flex items-center gap-[2px]"><i className="h-px flex-1 bg-[#444]" />Modulation<i className="h-px flex-1 bg-[#444]" /></div>
        <dl className="grid grid-cols-3 px-[4px] text-center [&_dd]:text-[#ffae00]">
          <div><dt>Rate</dt><dd>0.46 Hz</dd></div>
          <div><dt>Filter</dt><dd>0.8 %</dd></div>
          <div><dt>Time</dt><dd>0.0 %</dd></div>
        </dl>
      </div>
      <div className="flex w-[32px] flex-col gap-px">
        <span className="h-[8px]">Mode</span>
        <button className={KEY_ON}>Repitch</button>
        <button className={KEY}>Fade</button>
        <button className={KEY}>Jump</button>
        <button className={clsx(KEY, 'mt-[9px] whitespace-nowrap')}>Ping Pong</button>
        <Knob label="Dry/Wet" value={0.28} text="28 %" className="mt-[11px]" />
      </div>
    </div>
  </Device>
);

const Reverb = () => (
  <Device title="Reverb" icons={0} className="basis-[60px]">
    <div className="mx-px flex h-[65px] flex-col rounded-[2px] bg-[#1a1a1a] px-[2px] pt-[2px] text-[#ffae00]">
      <div className="flex items-center gap-[2px] font-bold text-[#d4d4d4]">Input Filter<i className="h-px flex-1 bg-[#555]" /></div>
      <div className="mt-px grid grid-cols-2 gap-[2px] text-[#222]">
        <button className="h-[8px] bg-[#ffae00] leading-[8px]">Lo Cut</button>
        <button className="h-[8px] bg-[#ffae00] leading-[8px]">Hi Cut</button>
      </div>
      <svg viewBox="0 0 54 34" preserveAspectRatio="none" className="mt-[2px] h-[34px] w-full" fill="none">
        <path d="M.5 .5h53v33H.5ZM10 0v34M18 0v34M27 0v34M38 0v34M46 0v34M0 11h54M0 22h54" stroke="#3c3c3c" strokeWidth=".7" />
        <path d="M0 31C12 30 12 12 21 12h11c10 0 14 6 22 19" stroke="#4fc0d6" strokeWidth="1.300" />
        <circle cx="31" cy="13" r="3.600" stroke="#ffae00" strokeWidth="1.200" />
      </svg>
      <div className="flex justify-between"><span>1.50 kHz</span><span>5.85</span></div>
    </div>
    <Knob label="Predelay" value={0.56} text="16.1 ms" className="mt-[2px]" />
  </Device>
);

/* ---------- status bar ---------- */

// Per device: [dark x, dark y, dark width, dark height, has orange mark]
const CHAIN = [
  [2, 7, 8, 3, false], [1, 5, 10, 5, false], [5, 2, 4, 8, true], [1, 3, 10, 5, true],
  [1, 3, 10, 5, true], [2, 3, 8, 6, false], [4, 2, 5, 8, false], [3, 2, 3, 8, true],
];

const StatusBar = () => (
  <footer className="flex h-[23px] items-start">
    <div className="flex w-[20px] shrink-0 justify-center pt-[7px]"><RoundButton label="Show info" dir="right" /></div>
    <div className="mt-[6px] flex h-[13px] flex-[531] items-center gap-[7px] rounded-[2px] border-2 border-[#4b4b4b] bg-[#989898] pl-[4px] whitespace-nowrap">
      <span>Time Selection</span><span>Start: 62.1.1</span><span>End: 73.1.1</span><span>Length: 11.0.0</span><span className="-ml-[4px]">(Duration: 0:16)</span>
    </div>
    <div className="mt-[6px] ml-[5px] h-[13px] flex-[117] rounded-[2px] border-2 border-[#4b4b4b] bg-[#a4a4a4]">
      <svg viewBox="0 0 112 9" preserveAspectRatio="none" className="h-full w-full" stroke="#6a6a6a" strokeWidth=".7">
        <path d="M12 1h60M8 3h34M8 5h36M22 7h28M0 8h28M60 8h8M80 8h20M40 2h30" /><path d="M28 0v9" stroke="#222" />
      </svg>
    </div>
    <div className="ml-[5px] flex h-[19px] w-[123px] items-center gap-[2px] rounded-b-[3px] bg-[#4b4b4b] px-[2px] pt-[5px]">
      <span className="font-bold">Keys</span>
      <svg viewBox="0 0 103 12" className="w-[103px]">
        {CHAIN.map(([x, y, w, h, lit], k) => (
          <g key={k} transform={`translate(${k * 12.8} 0)`}>
            <rect x="1" y="1.500" width="11.500" height="9" fill="#9a9a9a" />
            <rect x={x} y={y} width={w} height={h} fill="#1d1d1d" />
            {lit && <path d={`M${x} ${y}h3`} stroke="#ffae00" />}
            {lit && <path d={`M${x + 1} ${y + 3}h3`} stroke="#4b8d9a" strokeWidth=".6" />}
            <path d="M2 2.500h3M8 2.500h3" stroke="#555" strokeWidth=".6" />
          </g>
        ))}
        <rect x="1" y="1" width="32" height="10" fill="none" stroke="#050505" strokeWidth="1.400" />
      </svg>
    </div>
    <div className="flex w-[19px] shrink-0 justify-center pt-[7px]"><RoundButton label="Hide devices" dir="up" /></div>
  </footer>
);

export default function App() {
  return (
    <main className="min-h-screen bg-[#6f6f6f] font-['Roboto','Liberation_Sans',sans-serif] text-[6px] leading-[8px] font-medium text-[#161616]">
      <TopBar />
      <Arrangement />
      <section className="mx-[5px] mt-[5px] flex h-[110px] overflow-hidden rounded-[3px] bg-[#4b4b4b] pt-[2px] pr-px pb-px">
        <ChainMeter width="w-[8px]" />
        <MidiMonitor />
        <ChainMeter />
        <MpeControl />
        <ChainMeter />
        <EPiano />
        <ChainMeter green width="w-[6px]" />
        <Delay />
        <ChainMeter green />
        <Reverb />
      </section>
      <StatusBar />
    </main>
  );
}
